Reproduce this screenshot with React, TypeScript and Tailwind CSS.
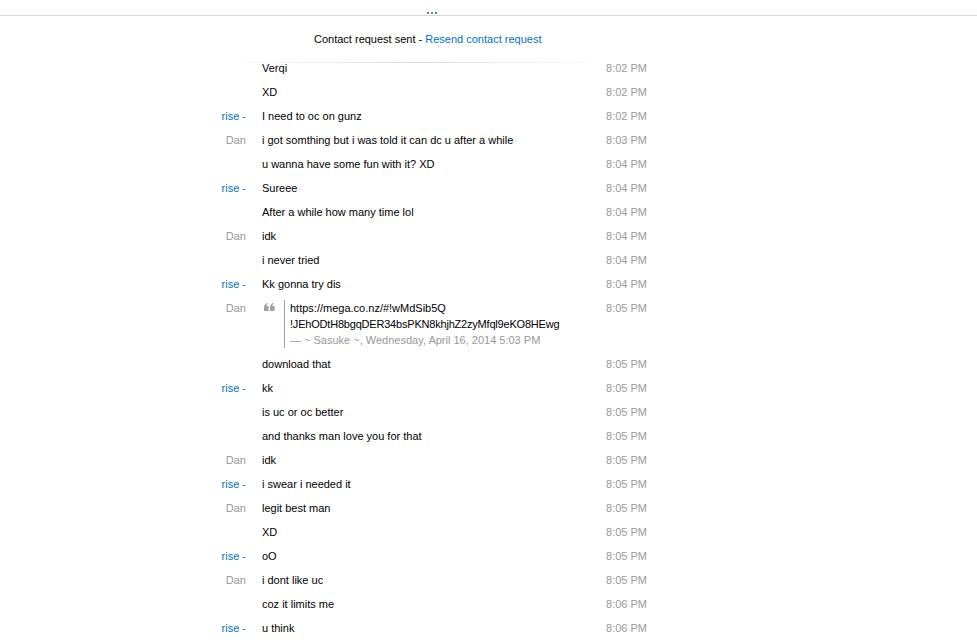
import React from "react";

type Row = { s?: "rise" | "Dan"; t: string; time: string };

const rows1: Row[] = [
  { t: "Verqi", time: "8:02 PM" },
  { t: "XD", time: "8:02 PM" },
  { s: "rise", t: "I need to oc on gunz", time: "8:02 PM" },
  { s: "Dan", t: "i got somthing but i was told it can dc u after a while", time: "8:03 PM" },
  { t: "u wanna have some fun with it? XD", time: "8:04 PM" },
  { s: "rise", t: "Sureee", time: "8:04 PM" },
  { t: "After a while how many time lol", time: "8:04 PM" },
  { s: "Dan", t: "idk", time: "8:04 PM" },
  { t: "i never tried", time: "8:04 PM" },
  { s: "rise", t: "Kk gonna try dis", time: "8:04 PM" },
];

const rows2: Row[] = [
  { t: "download that", time: "8:05 PM" },
  { s: "rise", t: "kk", time: "8:05 PM" },
  { t: "is uc or oc better", time: "8:05 PM" },
  { t: "and thanks man love you for that", time: "8:05 PM" },
  { s: "Dan", t: "idk", time: "8:05 PM" },
  { s: "rise", t: "i swear i needed it", time: "8:05 PM" },
  { s: "Dan", t: "legit best man", time: "8:05 PM" },
  { t: "XD", time: "8:05 PM" },
  { s: "rise", t: "oO", time: "8:05 PM" },
  { s: "Dan", t: "i dont like uc", time: "8:05 PM" },
  { t: "coz it limits me", time: "8:06 PM" },
  { s: "rise", t: "u think", time: "8:06 PM" },
];

function Sender({ s }: { s?: "rise" | "Dan" }) {
  return (
    <div className="w-[246px] shrink-0 text-right">
      {s === "rise" && <span className="text-[#0072c6]">rise -</span>}
      {s === "Dan" && <span className="text-[#999999]">Dan</span>}
    </div>
  );
}

function MsgRow({ r }: { r: Row }) {
  return (
    <div className="flex h-[24px] items-center">
      <Sender s={r.s} />
      <div className="w-[346px] shrink-0 pl-[16px] text-black whitespace-nowrap">{r.t}</div>
      <div className="w-[55px] shrink-0 text-right text-[#999999]">{r.time}</div>
    </div>
  );
}

export default function App() {
  return (
    <div
      className="w-[977px] h-[643px] bg-white overflow-hidden text-[11px] leading-[16px]"
      style={{ fontFamily: '"Liberation Sans", Arial, sans-serif' }}
    >
      <div className="relative h-[16px] border-b border-[#d9d9d9]">
        <div className="absolute left-[427px] top-[12px] flex gap-[2px]">
          <div className="w-[2px] h-[2px] bg-[#5b7db1]" />
          <div className="w-[2px] h-[2px] bg-[#5b7db1]" />
          <div className="w-[2px] h-[2px] bg-[#5b7db1]" />
        </div>
      </div>
      <div className="flex h-[40px] items-start pt-[15px]">
        <div className="w-[314px] shrink-0" />
        <div className="whitespace-nowrap text-black">
          Contact request sent - <span className="text-[#0072c6]">Resend contact request</span>
        </div>
      </div>
      <div className="relative">
        <div className="absolute left-[228px] top-[6px] w-[380px] h-[1px] bg-gradient-to-r from-transparent via-[#dcdcdc] to-transparent" />
        {rows1.map((r, i) => (
          <MsgRow key={"a" + i} r={r} />
        ))}
        <div className="flex h-[56px] items-start pt-[4px]">
          <Sender s="Dan" />
          <div className="w-[346px] shrink-0 pl-[16px] flex">
            <div className="w-[22px] shrink-0 pt-[3px] pl-[2px]">
              <svg width="11" height="8" viewBox="0 0 11 8">
                <path d="M0 4.5 C0 1.8 1.5 0.4 3.5 0 L4 1 C2.8 1.4 2.2 2.2 2.2 3 L4.5 3 L4.5 8 L0 8 Z" fill="#a0a0a0" />
                <path d="M6 4.5 C6 1.8 7.5 0.4 9.5 0 L10 1 C8.8 1.4 8.2 2.2 8.2 3 L10.5 3 L10.5 8 L6 8 Z" fill="#a0a0a0" />
              </svg>
            </div>
            <div className="border-l border-[#a0a0a0] pl-[5px] whitespace-nowrap">
              <div className="text-black">https://mega.co.nz/#!wMdSib5Q</div>
              <div className="text-black tracking-[-0.2px]">!JEhODtH8bgqDER34bsPKN8khjhZ2zyMfql9eKO8HEwg</div>
              <div className="text-[#999999]">— ~ Sasuke ~, Wednesday, April 16, 2014 5:03 PM</div>
            </div>
          </div>
          <div className="w-[55px] shrink-0 text-right text-[#999999]">8:05 PM</div>
        </div>
        {rows2.map((r, i) => (
          <MsgRow key={"b" + i} r={r} />
        ))}
      </div>
    </div>
  );
}
